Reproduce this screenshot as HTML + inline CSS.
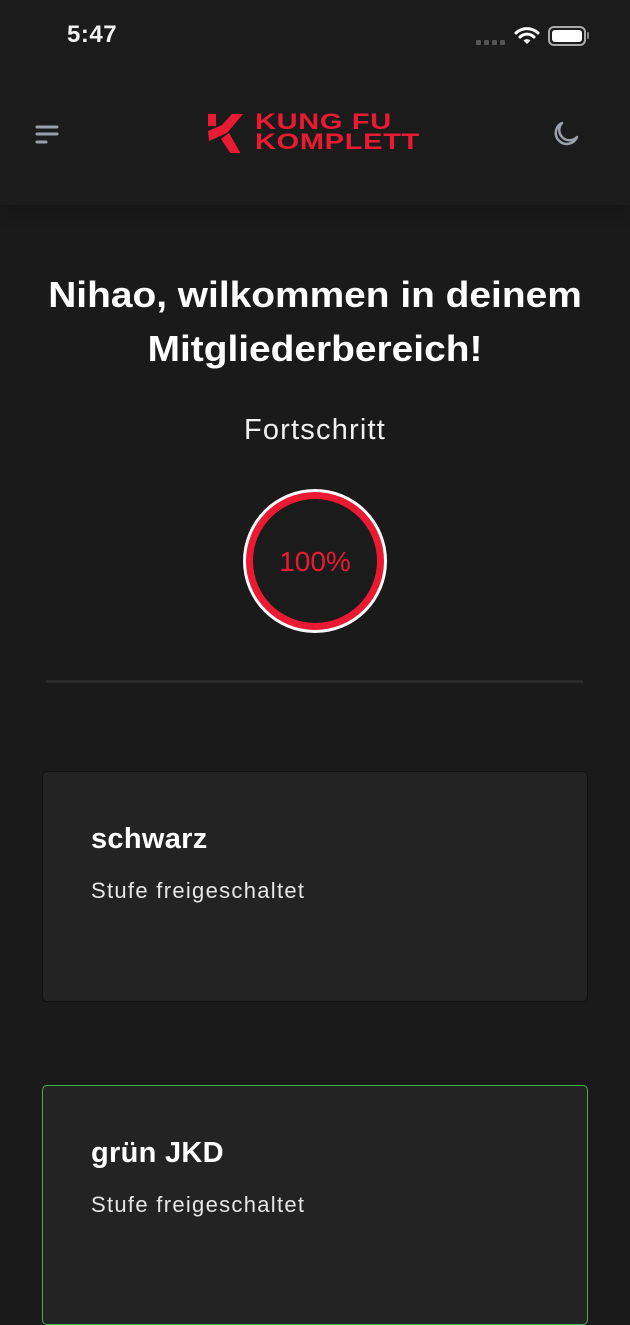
<!DOCTYPE html>
<html><head><meta charset="utf-8"><style>
*{margin:0;padding:0;box-sizing:border-box}
body{width:630px;height:1280px;background:#1a1a1a;font-family:"Liberation Sans",sans-serif;color:#fff;overflow:hidden;position:relative}
.abs{position:absolute}
.header{position:absolute;left:0;top:0;width:630px;height:205px;background:#1b1b1b;box-shadow:0 6px 18px rgba(0,0,0,.2)}
h1{position:absolute;top:268px;left:0;width:630px;text-align:center;font-size:36px;line-height:54px;font-weight:900;transform:scaleX(1.08);transform-origin:center}
.card{position:absolute;left:42px;width:546px;background:#232323;border:1px solid #111;border-radius:5px}
.card .t{position:absolute;left:48px;font-size:29px;font-weight:bold;letter-spacing:0.3px}
.card .s{position:absolute;left:48px;font-size:22px;color:#e6e6e6;letter-spacing:1.3px}
</style></head><body>
<div class="header"></div>
<div class="abs" style="left:67px;top:21px;font-size:24px;font-weight:bold;color:#f2f2f2;letter-spacing:0.5px">5:47</div>
<div class="abs" style="left:476px;top:40px;display:flex;gap:3px"><i style="width:5px;height:5px;background:#555;border-radius:1px;display:block"></i><i style="width:5px;height:5px;background:#555;border-radius:1px;display:block"></i><i style="width:5px;height:5px;background:#555;border-radius:1px;display:block"></i><i style="width:5px;height:5px;background:#555;border-radius:1px;display:block"></i></div>
<svg class="abs" style="left:514px;top:26px" width="26" height="20" viewBox="0 0 26 20"><path d="M2 7a16 16 0 0 1 22 0" stroke="#fff" stroke-width="3" fill="none" stroke-linecap="round"/><path d="M6 11a10 10 0 0 1 14 0" stroke="#fff" stroke-width="3" fill="none" stroke-linecap="round"/><path d="M13 18l-3.5-3.5a5 5 0 0 1 7 0z" fill="#fff"/></svg>
<div class="abs" style="left:548px;top:26px;width:38px;height:20px;border:2px solid #aaa;border-radius:6px;padding:2px"><div style="width:100%;height:100%;background:#fff;border-radius:3px"></div></div>
<div class="abs" style="left:587px;top:32px;width:2px;height:7px;background:#888;border-radius:1px"></div>
<svg class="abs" style="left:35px;top:124px" width="24" height="22"><g stroke="#9aa0aa" stroke-width="3" stroke-linecap="round"><line x1="2" y1="3" x2="22" y2="3"/><line x1="2" y1="10" x2="22" y2="10"/><line x1="2" y1="18" x2="11" y2="18"/></g></svg>
<svg class="abs" style="left:207px;top:113px" width="40" height="40" viewBox="0 0 40 40"><path d="M1 1h8v12l-8 0z M1 18l14-6 L25 1h11L20 20 2 28z M14 26l8-6 12 21h-10z" fill="#ea1a33"/></svg>
<div class="abs" style="left:255px;top:112px;font-size:21px;line-height:19px;font-weight:900;color:#ea1a33;letter-spacing:0.5px;transform:scale(1.38,1.05);transform-origin:left top">KUNG FU<br>KOMPLETT</div>
<svg class="abs" style="left:550px;top:120px" width="30" height="30" viewBox="0 0 30 30"><path d="M12 3a11 11 0 1 0 15 14A9 9 0 0 1 12 3z" stroke="#9aa0aa" stroke-width="2.5" fill="none" stroke-linejoin="round"/></svg>
<h1>Nihao, wilkommen in deinem<br>Mitgliederbereich!</h1>
<div class="abs" style="left:0;top:414px;width:630px;text-align:center;font-size:29px;color:#f0f0f0;letter-spacing:1.2px">Fortschritt</div>
<svg class="abs" style="left:240px;top:486px" width="150" height="150"><circle cx="75" cy="75" r="72" fill="#fff"/><circle cx="75" cy="75" r="69" fill="#ea1a33"/><circle cx="75" cy="75" r="62" fill="#1b1b1b"/><text x="75" y="85" text-anchor="middle" font-family="Liberation Sans" font-size="28" fill="#ea1a33">100%</text></svg>
<div class="abs" style="left:46px;top:680px;width:537px;height:3px;background:#2a2a2a"></div>
<div class="card" style="top:771px;height:231px"><div class="t" style="top:51px">schwarz</div><div class="s" style="top:106px">Stufe freigeschaltet</div></div>
<div class="card" style="top:1085px;height:240px;border-color:#3ab54a"><div class="t" style="top:51px">grün JKD</div><div class="s" style="top:106px">Stufe freigeschaltet</div></div>
</body></html>
